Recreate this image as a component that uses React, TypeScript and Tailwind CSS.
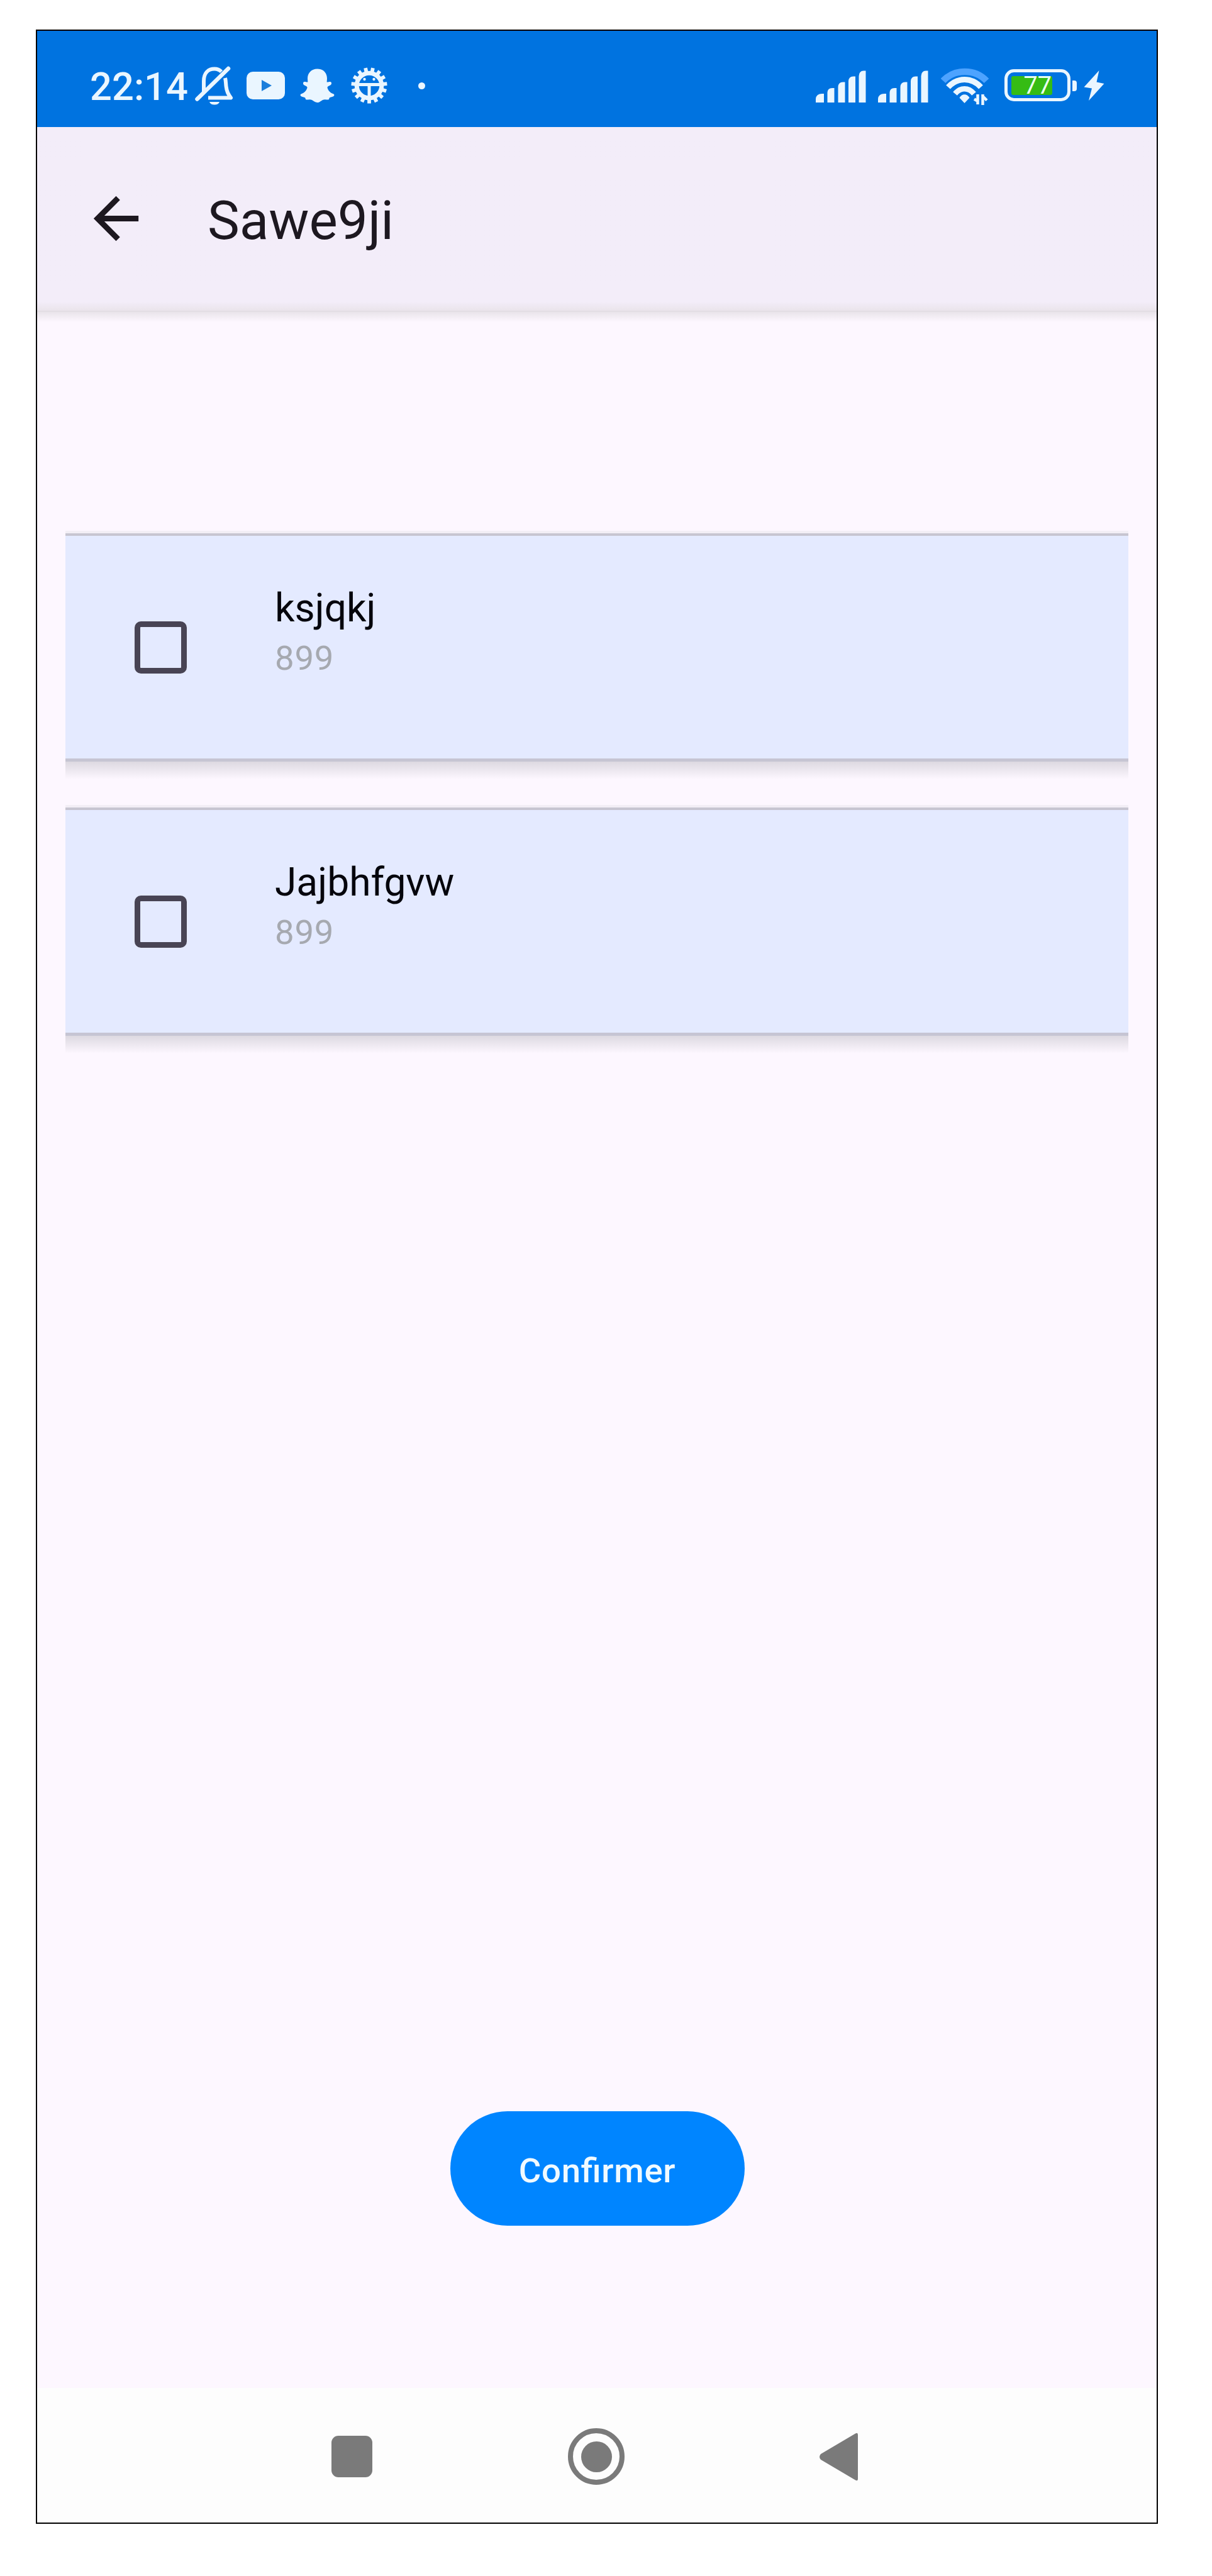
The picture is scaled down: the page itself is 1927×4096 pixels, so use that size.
import React from "react";

const ICE = "#eaf6ff";

function BellOff() {
  return (
    <svg className="ml-[10px] mt-[56px] h-[62px] w-[62px] shrink-0" viewBox="0 0 62 62" fill="none" stroke={ICE}>
      <path d="M14 41V24C14 10 22 4.500 31 4.500C35 4.500 39 6 42 9" strokeWidth="6" />
      <path d="M48 19C49 23 49 27 49.500 32C50.500 41 53 45 57 50.500H21" strokeWidth="6" strokeLinejoin="round" />
      <path d="M3.500 52.500L53 4" strokeWidth="6.500" strokeLinecap="round" />
      <path d="M23 57H39C38 60 35 61.500 31 61.500S24 60 23 57Z" fill={ICE} stroke="none" />
    </svg>
  );
}

function Video() {
  return (
    <svg className="ml-[20px] mt-[65px] h-[44px] w-[61px] shrink-0" viewBox="0 0 61 44">
      <rect x="0" y="0" width="61" height="44" rx="10" fill={ICE} />
      <path d="M24 13L40 22L24 31Z" fill="#1c7fdc" />
    </svg>
  );
}

function Ghost() {
  return (
    <svg className="ml-[24px] mt-[60px] h-[55px] w-[55px] shrink-0" viewBox="0 0 55 55" fill={ICE}>
      <path d="M27.500 0.500C37 0.500 43 7 43 16L42.600 21.500C44.500 21.900 46 20.800 48 20.900C50.600 21.200 50.600 25 48.500 26.200C46 27.600 43 28.500 43.500 30.600C45 35.500 48.500 39 53.500 40.500C55 41.200 54.600 43.500 53 44.300C50.500 45.500 47.500 45.700 46.800 46.500C46.300 47.500 46.500 49.300 45 49.500C42.500 49.700 39 48.400 36 50C33.500 51.300 31 54 27.500 54S21.500 51.300 19 50C16 48.400 12.500 49.700 10 49.500C8.500 49.300 8.700 47.500 8.200 46.500C7.500 45.700 4.500 45.500 2 44.300C0.400 43.500 0 41.200 1.500 40.500C6.500 39 10 35.500 11.500 30.600C12 28.500 9 27.600 6.500 26.200C4.400 25 4.400 21.200 7 20.900C9 20.800 10.500 21.900 12.400 21.500L12 16C12 7 18 0.500 27.500 0.500Z" />
    </svg>
  );
}

const TEETH = Array.from({ length: 15 }, (_, i) => i * 24 + 12);

function Gear() {
  return (
    <svg className="ml-[26px] mt-[58px] h-[58px] w-[58px] shrink-0" viewBox="0 0 58 58" fill="none" stroke={ICE}>
      {TEETH.map((a) => (
        <path key={a} d="M29 0.500V8" strokeWidth="5.800" strokeLinecap="butt" transform={`rotate(${a} 29 29)`} />
      ))}
      <circle cx="29" cy="29" r="19.800" strokeWidth="7" />
      <path d="M11 27.500H47" strokeWidth="5" />
      <path d="M29 28V47" strokeWidth="5" />
      <circle cx="21.500" cy="19" r="2.200" fill={ICE} stroke="none" />
      <circle cx="36.500" cy="19" r="2.200" fill={ICE} stroke="none" />
    </svg>
  );
}

function Signal() {
  return (
    <svg className="mt-[63px] h-[51px] w-[80px] shrink-0" viewBox="0 0 80 51" fill={ICE}>
      <path d="M0 51V45Q1 37 10 37H13V51Z" />
      <path d="M18.500 51V35Q19 28 26 28H29.500V51Z" />
      <path d="M35.500 51V26Q36 18.500 43 18.500H46.500V51Z" />
      <path d="M52 51V17Q52.500 9.500 59.500 9.500H63V51Z" />
      <path d="M68.500 51V9Q69 0.500 76 0.500H79.500V51Z" />
    </svg>
  );
}

function Wifi() {
  return (
    <svg className="ml-[20px] mt-[59px] h-[60px] w-[77px] shrink-0" viewBox="0 0 77 60" fill="none">
      <path d="M3.500 20.500C22 1 54 1 72.500 20.500" stroke="#4da3ff" strokeWidth="10.500" />
      <path d="M11.500 30.500C26 14.500 49 14.500 63.500 30.500" stroke={ICE} strokeWidth="9" />
      <path d="M22.500 41C31 30.500 44 30.500 52.500 41" stroke={ICE} strokeWidth="8.500" />
      <path d="M29.500 47.500C33.500 40.500 41.500 40.500 45.500 47.500L37.500 56Z" fill={ICE} />
      <path d="M58.500 42V53L53 49.500M58.500 51V58" stroke={ICE} strokeWidth="4.500" />
      <path d="M66.500 59V42M66.500 45L73 51.500" stroke={ICE} strokeWidth="4.500" />
    </svg>
  );
}

function StatusBar() {
  return (
    <div className="flex h-[153px] shrink-0 items-start bg-[#0073e0] pl-[84px]">
      <span className="mt-[58px] w-[157px] shrink-0 whitespace-nowrap text-[61.500px] font-medium leading-[62px] text-[#eaf6ff]">22:14</span>
      <BellOff />
      <Video />
      <Ghost />
      <Gear />
      <span className="ml-[49px] mt-[82px] h-[11px] w-[11px] shrink-0 rounded-full bg-[#eaf6ff]" />
      <div className="ml-auto flex items-start pr-[83px]">
        <Signal />
        <span className="w-[19px]" />
        <Signal />
        <Wifi />
        <div className="ml-[24px] mt-[61px] flex h-[51px] w-[105px] shrink-0 items-center rounded-[15px] border-[5.500px] border-[#eaf6ff] pl-[6px]">
          <div className="flex h-[30px] w-[65px] items-center justify-end rounded-[3px] bg-[#35bc14] pr-[1px]">
            <span className="text-[39.500px] leading-[30px] text-[#eafff0]">77</span>
          </div>
        </div>
        <span className="ml-[3px] mt-[79px] h-[17px] w-[7px] shrink-0 rounded-r-[4px] bg-[#eaf6ff]" />
        <svg className="ml-[11px] mt-[63px] h-[48px] w-[33px] shrink-0" viewBox="0 0 33 48" fill={ICE}>
          <path d="M24.500 0L0.500 26.500L13 28.500L8 48L32.500 21L20.500 18.500Z" />
        </svg>
      </div>
    </div>
  );
}

function AppBar() {
  return (
    <header className="flex h-[292px] shrink-0 items-start bg-[#f3edf9] bg-linear-to-b from-[#f3edf9] from-95% to-[#eae4eb] pl-[72px]">
      <svg className="mt-[92px] h-[107px] w-[107px] shrink-0" viewBox="0 0 24 24" fill="#1d1820">
        <path d="M20 11H7.830l5.590-5.590L12 4l-8 8 8 8 1.410-1.410L7.830 13H20v-2z" />
      </svg>
      <h1 className="ml-[92px] mt-[106px] text-[85.500px] leading-[86px] text-[#1d1820]">Sawe9ji</h1>
    </header>
  );
}

function Item({ name, price }: { name: string; price: string }) {
  return (
    <li className="flex flex-col">
      <div className="h-[4px] bg-[#f2eef5]" />
      <div className="flex h-[363px] items-start border-b-[5px] border-t-[4px] border-b-[#c6c5d3] border-t-[#c7c5d1] bg-[#e4eaff]">
        <span className="ml-[110px] mt-[136px] h-[83px] w-[83px] shrink-0 rounded-[10px] border-[9.500px] border-[#484454]" />
        <div className="ml-[140px] mt-[84px] flex flex-col">
          <span className="text-[62.300px] leading-[62px] text-[#05050c]">{name}</span>
          <span className="mt-[18px] text-[54.500px] leading-[60px] tracking-[0.800px] text-[#a6a9b0]">{price}</span>
        </div>
      </div>
      <div className="h-[28px] bg-linear-to-b from-[#ddd9e1] to-[#fdf7ff]" />
    </li>
  );
}

function NavBar() {
  return (
    <nav className="flex h-[214px] shrink-0 items-start bg-[#fdfdfd]">
      <span className="ml-[468px] mt-[76px] h-[66px] w-[65px] rounded-[11px] bg-[#7a7a7a]" />
      <span className="ml-[311px] mt-[64px] flex h-[90px] w-[90px] items-center justify-center rounded-full border-8 border-[#7a7a7a]">
        <span className="h-[49px] w-[49px] rounded-full bg-[#7a7a7a]" />
      </span>
      <svg className="ml-[310px] mt-[71px] h-[77px] w-[61px]" viewBox="0 0 61 77" fill="#7a7a7a">
        <path d="M57 1.500Q61 -1 61 4V73Q61 78 57 75.500L2 43Q-2 38.500 2 34Z" />
      </svg>
    </nav>
  );
}

const ITEMS = [
  { name: "ksjqkj", price: "899" },
  { name: "Jajbhfgvw", price: "899" },
];

export default function App() {
  return (
    <div className="h-[4096px] w-[1927px] overflow-hidden bg-white pl-[57px] pt-[47px] font-['Roboto',sans-serif]">
      <div className="flex h-[3966px] w-[1784px] flex-col border-2 border-black bg-[#fdf7ff]">
        <StatusBar />
        <AppBar />
        <div className="h-[2px] shrink-0 bg-[#e3dee4]" />
        <div className="h-[16px] shrink-0 bg-linear-to-b from-[#e9e4ea] to-[#fdf7ff]" />
        <main className="flex grow flex-col pl-[45px] pr-[45px] pt-[332px]">
          <ul className="flex flex-col gap-[41px]">
            {ITEMS.map((item) => (
              <Item key={item.name} name={item.name} price={item.price} />
            ))}
          </ul>
          <button className="mb-[258px] ml-[612px] mt-auto flex h-[182px] w-[468px] items-center justify-center rounded-full bg-[#0085ff] pr-[1px] pt-[5px] text-[54.500px] font-medium leading-[60px] tracking-[0.700px] text-[#f0faff] [font-feature-settings:'liga'_1]">
            Confirmer
          </button>
        </main>
        <NavBar />
      </div>
    </div>
  );
}
